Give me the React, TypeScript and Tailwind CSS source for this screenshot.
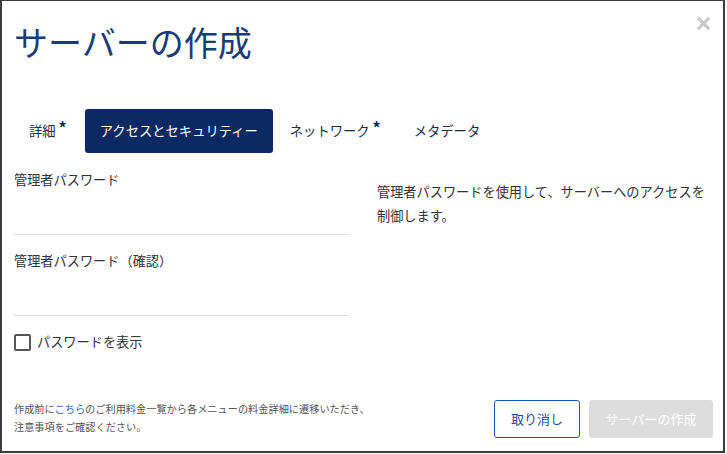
import React from "react";

const font = { fontFamily: '"Noto Sans CJK JP", "Noto Sans", sans-serif' };

function Star() {
  return (
    <span className="ml-[3px] mr-[1px] text-[16px] font-bold leading-none text-[#0b2a60] relative -top-[4px]">*</span>
  );
}

export default function App() {
  return (
    <div
      className="w-[725px] h-[453px] bg-white border-l-2 border-r-2 border-b-2 border-t border-[#3c3c3c] flex flex-col relative"
      style={font}
    >
      <button className="absolute right-[12px] top-[14px] w-[16px] h-[16px] flex items-center justify-center" aria-label="close">
        <svg width="13" height="13" viewBox="0 0 13 13">
          <path d="M2 2 L11 11 M11 2 L2 11" stroke="#c9c9c9" strokeWidth="3.2" strokeLinecap="square" />
        </svg>
      </button>

      <div className="pl-[12px] pt-[19px]">
        <h1 className="text-[34px] leading-[44px] text-[#183c76] font-normal">サーバーの作成</h1>
      </div>

      <div className="pl-[12px] mt-[45px] flex gap-[2px] h-[44px]">
        <div className="px-[15px] flex items-center text-[13.3px] text-[#1e2d4a]">
          詳細<Star />
        </div>
        <div className="px-[15px] flex items-center text-[13.3px] text-white bg-[#0b2a63] rounded-[3px]">
          アクセスとセキュリティー
        </div>
        <div className="px-[15px] flex items-center text-[13.3px] text-[#1e2d4a]">
          ネットワーク<Star />
        </div>
        <div className="px-[15px] flex items-center text-[13.3px] text-[#1e2d4a]">
          メタデータ
        </div>
      </div>

      <div className="pl-[12px] flex gap-[28px]">
        <div className="w-[335px] flex flex-col">
          <div className="mt-[17px]">
            <div className="text-[13.2px] leading-[20px] text-[#333]">管理者パスワード</div>
            <div className="h-[45px] border-b border-[#dcdcdc]"></div>
          </div>
          <div className="mt-[16px]">
            <div className="text-[13.2px] leading-[20px] text-[#333]">管理者パスワード（確認）</div>
            <div className="h-[45px] border-b border-[#dcdcdc]"></div>
          </div>
          <label className="mt-[16px] flex items-center gap-[6px] h-[20px]">
            <span className="w-[17px] h-[17px] border-2 border-[#555] rounded-[2px] bg-white"></span>
            <span className="text-[13.2px] leading-[20px] text-[#333]">パスワードを表示</span>
          </label>
        </div>
        <div className="pt-[27px] flex-1 pr-[8px]">
          <p className="text-[13.2px] leading-[24px] text-[#333]">
            管理者パスワードを使用して、サーバーへのアクセスを制御します。
          </p>
        </div>
      </div>

      <div className="mt-auto pl-[12px] pr-[10px] pb-[13px] flex items-end justify-between">
        <p className="text-[10.2px] leading-[18px] text-[#555] mb-[2px]">
          作成前に<span className="text-[#2a6bc0]">こちら</span>のご利用料金一覧から各メニューの料金詳細に遷移いただき、
          <br />
          注意事項をご確認ください。
        </p>
        <div className="flex gap-[9px]">
          <button className="w-[86px] h-[38px] border border-[#1f55a8] rounded-[3px] text-[13px] text-[#1f4f9e] bg-white">
            取り消し
          </button>
          <button className="w-[124px] h-[38px] rounded-[3px] text-[13px] text-white bg-[#dddddd]">
            サーバーの作成
          </button>
        </div>
      </div>
    </div>
  );
}
